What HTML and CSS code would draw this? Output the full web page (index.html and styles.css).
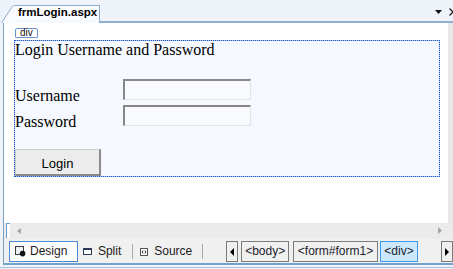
FILE: index.html
```html
<!DOCTYPE html>
<html>
<head>
<meta charset="utf-8">
<title>frmLogin.aspx</title>
<link rel="stylesheet" href="styles.css">
</head>
<body>
<div class="window">
  <div class="tabstrip">
    <div class="tab">
      <svg class="tab-slant" width="14" height="18" viewBox="0 0 14 18"><path d="M0 18 L10.5 2 Q11.8 0 14 0 L14 18 Z" fill="#f9fbfe"/><path d="M0.5 18 L10.8 2.2 Q12 0.5 14 0.5" fill="none" stroke="#8eaccb"/></svg>
      <span class="tab-title">frmLogin.aspx</span>
    </div>
    <svg class="dropdown" width="7" height="4" viewBox="0 0 7 4"><path d="M0 0 L7 0 L3.5 4 Z" fill="#111"/></svg>
    <svg class="close-peek" width="4" height="8" viewBox="0 0 4 8"><path d="M0.5 0.5 L4 4 M0.5 7.5 L4 4" stroke="#222" stroke-width="1.3" fill="none"/></svg>
  </div>

  <div class="frame">
    <div class="doc-row">
      <div class="surface">
        <div class="tag-label">div</div>
        <div class="div-box">
          <div class="title">Login Username and Password</div>
          <div class="row first"><span class="lbl">Username</span><span class="input"></span></div>
          <div class="row"><span class="lbl">Password</span><span class="input"></span></div>
          <div class="btn">Login</div>
        </div>
      </div>
      <div class="vscroll"></div>
    </div>

    <div class="hscroll">
      <span class="split-handle"></span>
      <svg class="arrow-left" width="4" height="6" viewBox="0 0 4 6"><path d="M4 0 L0 3 L4 6 Z" fill="#a3a3a3"/></svg>
      <span class="track"></span>
      <svg class="arrow-right" width="4" height="7" viewBox="0 0 4 7"><path d="M0 0 L4 3.5 L0 7 Z" fill="#a3a3a3"/></svg>
    </div>

    <div class="bottombar">
      <div class="view-btn active">
        <svg class="ic" width="11" height="11" viewBox="0 0 11 11"><rect x="0.5" y="0.5" width="8" height="8" fill="#eef2f7" stroke="#3d3d3d"/><circle cx="7.6" cy="7.6" r="2.8" fill="#111"/></svg>
        <span class="vb-text">Design</span>
      </div>
      <div class="view-btn split">
        <svg class="ic" width="9" height="7" viewBox="0 0 9 7"><rect x="0.5" y="0.5" width="8" height="6" fill="#fff" stroke="#2c3b55"/><line x1="1" y1="1.5" x2="8" y2="1.5" stroke="#2c3b55"/></svg>
        <span class="vb-text">Split</span>
      </div>
      <span class="sep"></span>
      <div class="view-btn source">
        <svg class="ic" width="8" height="8" viewBox="0 0 8 8"><rect x="0.5" y="0.5" width="7" height="7" fill="#fff" stroke="#555"/><path d="M3.2 2.6 L2 4 L3.2 5.4 M4.8 2.6 L6 4 L4.8 5.4" stroke="#222" fill="none"/></svg>
        <span class="vb-text">Source</span>
      </div>
      <span class="sep second"></span>
      <div class="nav-btn left"><svg width="4" height="8" viewBox="0 0 4 8"><path d="M4 0 L0 4 L4 8 Z" fill="#000"/></svg></div>
      <div class="crumb body-tag">&lt;body&gt;</div>
      <div class="crumb form-tag">&lt;form#form1&gt;</div>
      <div class="crumb div-tag current">&lt;div&gt;</div>
      <div class="nav-btn right"><svg width="4" height="8" viewBox="0 0 4 8"><path d="M0 0 L4 4 L0 8 Z" fill="#000"/></svg></div>
    </div>
  </div>
  <div class="outer-line"></div>
</div>
</body>
</html>
```

FILE: styles.css
```css
html, body {
  margin: 0;
  padding: 0;
}
body {
  width: 453px;
  height: 269px;
  overflow: hidden;
  background: #eef2f9;
  font-family: "Liberation Sans", Arial, sans-serif;
}
.window {
  display: flex;
  flex-direction: column;
  width: 453px;
  height: 269px;
}

/* tab strip */
.tabstrip {
  height: 21px;
  display: flex;
  align-items: flex-start;
  flex-shrink: 0;
}
.tab {
  position: relative;
  z-index: 1;
  align-self: flex-end;
  margin-left: 15px;
  margin-bottom: -2px;
  width: 85px;
  height: 18px;
  box-sizing: border-box;
  border-top: 1px solid #8eaccb;
  border-right: 1px solid #8eaccb;
  background: linear-gradient(#fdfeff, #f6f9fd);
}
.tab-slant {
  position: absolute;
  left: -14px;
  top: -1px;
  display: block;
}
.tab-title {
  display: block;
  padding-left: 3px;
  font-weight: bold;
  font-size: 11.5px;
  line-height: 13px;
  color: #000;
  white-space: nowrap;
}
.dropdown {
  margin-left: auto;
  margin-top: 10px;
  display: block;
}
.close-peek {
  margin-left: 7px;
  margin-top: 8px;
  display: block;
}

/* frame */
.frame {
  margin-left: 3px;
  border-left: 1px solid #7b9fc2;
  border-top: 2px solid #8fafcd;
  border-bottom: 2px solid #74a2cf;
  display: flex;
  flex-direction: column;
  flex-shrink: 0;
}
.doc-row {
  height: 200px;
  display: flex;
}
.surface {
  flex: 1;
  background: #fff;
  padding: 5px 0 0 10px;
}
.vscroll {
  width: 5px;
  background: #e8e8e8;
}

.tag-label {
  width: 23px;
  height: 10px;
  box-sizing: border-box;
  margin-left: 1px;
  border: 1px solid #6b93cf;
  border-radius: 2px 2px 1px 1px;
  font-size: 10px;
  line-height: 8px;
  padding-left: 4px;
  color: #111;
  background: #fff;
}
.div-box {
  width: 426px;
  box-sizing: border-box;
  margin-top: 2px;
  border: 1px solid #a9c5ef;
  outline: 1px dotted #1f52c4;
  outline-offset: -1px;
  background: #f5f9ff;
  font-family: "Liberation Serif", "Times New Roman", serif;
  font-size: 16px;
  color: #000;
}
.title {
  line-height: 18px;
  white-space: nowrap;
}
.row {
  display: flex;
  height: 26px;
}
.row.first {
  margin-top: 20px;
}
.lbl {
  width: 108px;
  align-self: flex-end;
  line-height: 18px;
}
.input {
  width: 128px;
  height: 21px;
  box-sizing: border-box;
  border-top: 2px solid #878787;
  border-left: 2px solid #878787;
  border-right: 1px solid #e3e3e3;
  border-bottom: 1px solid #e3e3e3;
  background: #f8fafe;
}
.btn {
  margin-top: 18px;
  width: 86px;
  height: 27px;
  box-sizing: border-box;
  border-top: 1px solid #cdcdcd;
  border-left: 1px solid #cdcdcd;
  border-right: 2px solid #8a8a8a;
  border-bottom: 2px solid #8a8a8a;
  background: #ececec;
  font-family: "Liberation Sans", Arial, sans-serif;
  font-size: 13px;
  line-height: 21px;
  padding-top: 3px;
  text-align: center;
  color: #000;
}

/* horizontal scrollbar */
.hscroll {
  height: 16px;
  display: flex;
  align-items: flex-start;
  background: #ebebeb;
}
.split-handle {
  margin-left: 2px;
  width: 4px;
  height: 15px;
  box-sizing: border-box;
  border-left: 1px solid #6f9fd0;
  border-top: 1px solid #6f9fd0;
  background: #fbfcfe;
}
.arrow-left {
  display: block;
  margin-left: 7px;
  margin-top: 5px;
}
.track {
  flex: 1;
}
.arrow-right {
  display: block;
  margin-top: 4px;
  margin-right: 11px;
}

/* bottom bar */
.bottombar {
  height: 24px;
  box-sizing: border-box;
  padding: 2px 0 0 5px;
  display: flex;
  align-items: flex-start;
  background: #f0f0f0;
  font-size: 12px;
  color: #1b1b1b;
}
.view-btn {
  height: 21px;
  box-sizing: border-box;
  display: flex;
  align-items: center;
  line-height: 19px;
  border: 1px solid transparent;
}
.view-btn .ic {
  display: block;
}
.view-btn.active {
  width: 70px;
  border-color: #4a8ad6;
  background: #fff;
  padding-left: 5px;
}
.view-btn.active .vb-text {
  margin-left: 4px;
}
.view-btn.split {
  margin-left: 4px;
}
.view-btn.split .vb-text {
  margin-left: 6px;
}
.view-btn.source {
  margin-left: 6px;
}
.view-btn.source .vb-text {
  margin-left: 6px;
}
.sep {
  width: 1px;
  height: 15px;
  margin-top: 3px;
  margin-left: 10px;
  background: #a8a8a8;
}
.sep.second {
  margin-left: 9px;
}
.nav-btn {
  width: 12px;
  height: 21px;
  box-sizing: border-box;
  border: 1px solid #7a7a7a;
  display: flex;
  align-items: center;
  justify-content: center;
}
.nav-btn svg {
  display: block;
}
.nav-btn.left {
  margin-left: 23px;
}
.nav-btn.right {
  margin-left: 23px;
}
.crumb {
  height: 21px;
  box-sizing: border-box;
  border: 1px solid #7c7c7c;
  line-height: 19px;
  text-align: center;
  white-space: nowrap;
  color: #1d1d2e;
}
.body-tag {
  width: 49px;
  margin-left: 3px;
}
.form-tag {
  width: 86px;
  margin-left: 4px;
}
.div-tag {
  width: 39px;
  margin-left: 2px;
}
.crumb.current {
  background: #cce8fc;
  border-color: #3d9be9;
}

.outer-line {
  margin-top: 2px;
  height: 1px;
  background: #a2c2e0;
}
```
